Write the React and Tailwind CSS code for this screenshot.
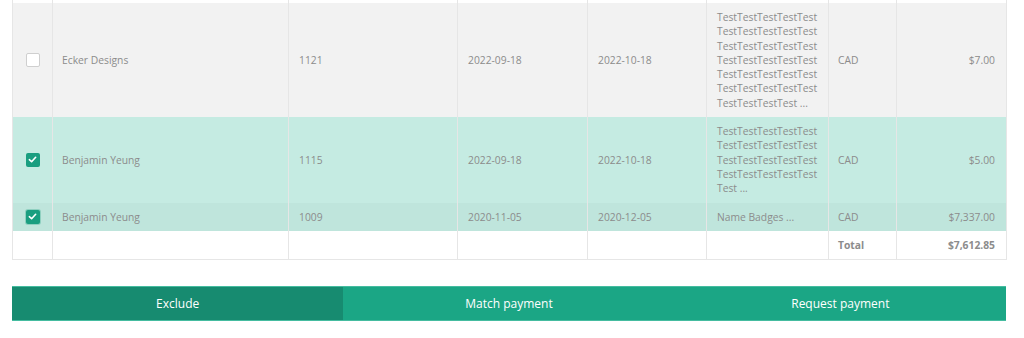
import React from 'react';

const rows = [
  {
    name: 'Ecker Designs',
    num: '1121',
    date: '2022-09-18',
    due: '2022-10-18',
    memo: ['TestTestTestTestTest', 'TestTestTestTestTest', 'TestTestTestTestTest', 'TestTestTestTestTest', 'TestTestTestTestTest', 'TestTestTestTestTest', 'TestTestTestTest ...'],
    cur: 'CAD',
    amount: '$7.00',
    checked: false,
    bg: 'bg-[#f2f2f2]',
  },
  {
    name: 'Benjamin Yeung',
    num: '1115',
    date: '2022-09-18',
    due: '2022-10-18',
    memo: ['TestTestTestTestTest', 'TestTestTestTestTest', 'TestTestTestTestTest', 'TestTestTestTestTest', 'Test ...'],
    cur: 'CAD',
    amount: '$5.00',
    checked: true,
    bg: 'bg-[#c5ebe2]',
  },
  {
    name: 'Benjamin Yeung',
    num: '1009',
    date: '2020-11-05',
    due: '2020-12-05',
    memo: ['Name Badges ...'],
    cur: 'CAD',
    amount: '$7,337.00',
    checked: true,
    focus: true,
    bg: 'bg-[#bfe5dc]',
  },
];

const Checkbox = ({ checked, focus }) => (
  <span
    className={`mx-auto flex h-[14px] w-[14px] items-center justify-center rounded-[2px] ${
      checked ? 'bg-[#1a9e80]' : 'border border-[#cfcfcf] bg-white'
    } ${focus ? 'shadow-[0_0_0_1px_#8fd0c0]' : ''}`}
  >
    {checked && (
      <svg width="9" height="9" viewBox="0 0 10 10" fill="none">
        <path d="M1.5 5.2L4 7.5L8.5 2.5" stroke="white" strokeWidth="1.8" strokeLinecap="round" strokeLinejoin="round" />
      </svg>
    )}
  </span>
);

const td = 'border-x border-[#e6e6e6] py-[7px] align-middle';

export default function App() {
  return (
    <div className="h-[338px] w-[1024px] bg-white px-[12px] text-[10.3px] leading-[14.3px] text-[#8c8c8c]" style={{ fontFamily: '"Open Sans", sans-serif' }}>
      <table className="w-[994px] table-fixed border-collapse">
        <colgroup>
          <col className="w-[40px]" />
          <col className="w-[236px]" />
          <col className="w-[169px]" />
          <col className="w-[130px]" />
          <col className="w-[119px]" />
          <col className="w-[122px]" />
          <col className="w-[68px]" />
          <col className="w-[110px]" />
        </colgroup>
        <tbody>
          <tr className="h-[3px] bg-white">
            {[...Array(8)].map((_, i) => (
              <td key={i} className="border-x border-[#e6e6e6] p-0" />
            ))}
          </tr>
          {rows.map((r, i) => (
            <tr key={i} className={r.bg}>
              <td className={`${td} px-0`}>
                <Checkbox checked={r.checked} focus={r.focus} />
              </td>
              <td className={`${td} pl-[9px]`}>{r.name}</td>
              <td className={`${td} pl-[10px]`}>{r.num}</td>
              <td className={`${td} pl-[10px]`}>{r.date}</td>
              <td className={`${td} pl-[10px]`}>{r.due}</td>
              <td className={`${td} pl-[10px]`}>
                {r.memo.map((m, j) => (
                  <div key={j} className="whitespace-nowrap">{m}</div>
                ))}
              </td>
              <td className={`${td} pl-[9px]`}>{r.cur}</td>
              <td className={`${td} text-right pr-[11px]`}>{r.amount}</td>
            </tr>
          ))}
          <tr className="border-b border-[#e6e6e6] bg-white">
            <td className={td} />
            <td className={td} />
            <td className={td} />
            <td className={td} />
            <td className={td} />
            <td className={td} />
            <td className={`${td} pl-[9px] font-bold`}>Total</td>
            <td className={`${td} text-right font-bold pr-[11px]`}>$7,612.85</td>
          </tr>
        </tbody>
      </table>
      <div className="mt-[26px] flex h-[35px] w-[994px] border-y border-[#45bca0] text-[12px] text-white">
        <button className="flex flex-1 items-center justify-center bg-[#178b70]">Exclude</button>
        <button className="flex flex-1 items-center justify-center bg-[#1ba685]">Match payment</button>
        <button className="flex flex-1 items-center justify-center bg-[#1ba685]">Request payment</button>
      </div>
    </div>
  );
}
